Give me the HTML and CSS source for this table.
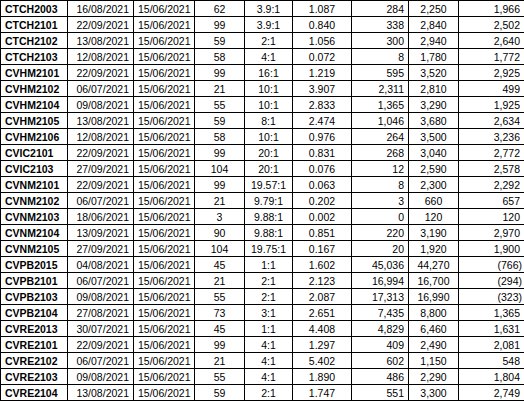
FILE: index.html
```html
<!DOCTYPE html>
<html>
<head>
<meta charset="utf-8">
<link rel="stylesheet" href="styles.css">
</head>
<body>
<table class="sheet">
<colgroup>
<col class="c1"><col class="c2"><col class="c3"><col class="c4"><col class="c5"><col class="c6"><col class="c7"><col class="c8"><col class="c9">
</colgroup>
<tbody>
<tr><td class="code">CTCH2003</td><td class="date">16/08/2021</td><td class="date">15/06/2021</td><td class="mid">62</td><td class="mid">3.9:1</td><td class="mid">1.087</td><td class="num">284</td><td class="mid">2,250</td><td class="acc">1,966</td></tr>
<tr><td class="code">CTCH2101</td><td class="date">22/09/2021</td><td class="date">15/06/2021</td><td class="mid">99</td><td class="mid">3.9:1</td><td class="mid">0.840</td><td class="num">338</td><td class="mid">2,840</td><td class="acc">2,502</td></tr>
<tr><td class="code">CTCH2102</td><td class="date">13/08/2021</td><td class="date">15/06/2021</td><td class="mid">59</td><td class="mid">2:1</td><td class="mid">1.056</td><td class="num">300</td><td class="mid">2,940</td><td class="acc">2,640</td></tr>
<tr><td class="code">CTCH2103</td><td class="date">12/08/2021</td><td class="date">15/06/2021</td><td class="mid">58</td><td class="mid">4:1</td><td class="mid">0.072</td><td class="num">8</td><td class="mid">1,780</td><td class="acc">1,772</td></tr>
<tr><td class="code">CVHM2101</td><td class="date">22/09/2021</td><td class="date">15/06/2021</td><td class="mid">99</td><td class="mid">16:1</td><td class="mid">1.219</td><td class="num">595</td><td class="mid">3,520</td><td class="acc">2,925</td></tr>
<tr><td class="code">CVHM2102</td><td class="date">06/07/2021</td><td class="date">15/06/2021</td><td class="mid">21</td><td class="mid">10:1</td><td class="mid">3.907</td><td class="num">2,311</td><td class="mid">2,810</td><td class="acc">499</td></tr>
<tr><td class="code">CVHM2104</td><td class="date">09/08/2021</td><td class="date">15/06/2021</td><td class="mid">55</td><td class="mid">10:1</td><td class="mid">2.833</td><td class="num">1,365</td><td class="mid">3,290</td><td class="acc">1,925</td></tr>
<tr><td class="code">CVHM2105</td><td class="date">13/08/2021</td><td class="date">15/06/2021</td><td class="mid">59</td><td class="mid">8:1</td><td class="mid">2.474</td><td class="num">1,046</td><td class="mid">3,680</td><td class="acc">2,634</td></tr>
<tr><td class="code">CVHM2106</td><td class="date">12/08/2021</td><td class="date">15/06/2021</td><td class="mid">58</td><td class="mid">10:1</td><td class="mid">0.976</td><td class="num">264</td><td class="mid">3,500</td><td class="acc">3,236</td></tr>
<tr><td class="code">CVIC2101</td><td class="date">22/09/2021</td><td class="date">15/06/2021</td><td class="mid">99</td><td class="mid">20:1</td><td class="mid">0.831</td><td class="num">268</td><td class="mid">3,040</td><td class="acc">2,772</td></tr>
<tr><td class="code">CVIC2103</td><td class="date">27/09/2021</td><td class="date">15/06/2021</td><td class="mid">104</td><td class="mid">20:1</td><td class="mid">0.076</td><td class="num">12</td><td class="mid">2,590</td><td class="acc">2,578</td></tr>
<tr><td class="code">CVNM2101</td><td class="date">22/09/2021</td><td class="date">15/06/2021</td><td class="mid">99</td><td class="mid">19.57:1</td><td class="mid">0.063</td><td class="num">8</td><td class="mid">2,300</td><td class="acc">2,292</td></tr>
<tr><td class="code">CVNM2102</td><td class="date">06/07/2021</td><td class="date">15/06/2021</td><td class="mid">21</td><td class="mid">9.79:1</td><td class="mid">0.202</td><td class="num">3</td><td class="mid">660</td><td class="acc">657</td></tr>
<tr><td class="code">CVNM2103</td><td class="date">18/06/2021</td><td class="date">15/06/2021</td><td class="mid">3</td><td class="mid">9.88:1</td><td class="mid">0.002</td><td class="num">0</td><td class="mid">120</td><td class="acc">120</td></tr>
<tr><td class="code">CVNM2104</td><td class="date">13/09/2021</td><td class="date">15/06/2021</td><td class="mid">90</td><td class="mid">9.88:1</td><td class="mid">0.851</td><td class="num">220</td><td class="mid">3,190</td><td class="acc">2,970</td></tr>
<tr><td class="code">CVNM2105</td><td class="date">27/09/2021</td><td class="date">15/06/2021</td><td class="mid">104</td><td class="mid">19.75:1</td><td class="mid">0.167</td><td class="num">20</td><td class="mid">1,920</td><td class="acc">1,900</td></tr>
<tr><td class="code">CVPB2015</td><td class="date">04/08/2021</td><td class="date">15/06/2021</td><td class="mid">45</td><td class="mid">1:1</td><td class="mid">1.602</td><td class="num">45,036</td><td class="mid">44,270</td><td class="acc neg">(766)</td></tr>
<tr><td class="code">CVPB2101</td><td class="date">06/07/2021</td><td class="date">15/06/2021</td><td class="mid">21</td><td class="mid">2:1</td><td class="mid">2.123</td><td class="num">16,994</td><td class="mid">16,700</td><td class="acc neg">(294)</td></tr>
<tr><td class="code">CVPB2103</td><td class="date">09/08/2021</td><td class="date">15/06/2021</td><td class="mid">55</td><td class="mid">2:1</td><td class="mid">2.087</td><td class="num">17,313</td><td class="mid">16,990</td><td class="acc neg">(323)</td></tr>
<tr><td class="code">CVPB2104</td><td class="date">27/08/2021</td><td class="date">15/06/2021</td><td class="mid">73</td><td class="mid">3:1</td><td class="mid">2.651</td><td class="num">7,435</td><td class="mid">8,800</td><td class="acc">1,365</td></tr>
<tr><td class="code">CVRE2013</td><td class="date">30/07/2021</td><td class="date">15/06/2021</td><td class="mid">45</td><td class="mid">1:1</td><td class="mid">4.408</td><td class="num">4,829</td><td class="mid">6,460</td><td class="acc">1,631</td></tr>
<tr><td class="code">CVRE2101</td><td class="date">22/09/2021</td><td class="date">15/06/2021</td><td class="mid">99</td><td class="mid">4:1</td><td class="mid">1.297</td><td class="num">409</td><td class="mid">2,490</td><td class="acc">2,081</td></tr>
<tr><td class="code">CVRE2102</td><td class="date">06/07/2021</td><td class="date">15/06/2021</td><td class="mid">21</td><td class="mid">4:1</td><td class="mid">5.402</td><td class="num">602</td><td class="mid">1,150</td><td class="acc">548</td></tr>
<tr><td class="code">CVRE2103</td><td class="date">09/08/2021</td><td class="date">15/06/2021</td><td class="mid">55</td><td class="mid">4:1</td><td class="mid">1.890</td><td class="num">486</td><td class="mid">2,290</td><td class="acc">1,804</td></tr>
<tr><td class="code">CVRE2104</td><td class="date">13/08/2021</td><td class="date">15/06/2021</td><td class="mid">59</td><td class="mid">2:1</td><td class="mid">1.747</td><td class="num">551</td><td class="mid">3,300</td><td class="acc">2,749</td></tr>
</tbody>
</table>
</body>
</html>
```
FILE: styles.css
```css
html, body {
  margin: 0;
  padding: 0;
  background: #ffffff;
}

.sheet {
  border-collapse: collapse;
  table-layout: fixed;
  width: 524px;
  font-family: "Liberation Sans", Arial, sans-serif;
  font-size: 10.5px;
  color: #000;
}

.c1 { width: 67px; }
.c2 { width: 66px; }
.c3 { width: 61px; }
.c4 { width: 50px; }
.c5 { width: 48px; }
.c6 { width: 59px; }
.c7 { width: 57px; }
.c8 { width: 50px; }
.c9 { width: 66px; }

.sheet tr {
  height: 16px;
}

.sheet td {
  border: 1px solid #000;
  padding: 0 4px;
  height: 15px;
  line-height: 14px;
  white-space: nowrap;
  overflow: hidden;
  vertical-align: middle;
}

.code {
  font-weight: bold;
  text-align: left;
  padding-left: 3px;
}

.date {
  text-align: right;
}

.mid {
  text-align: center;
}

.num {
  text-align: right;
}

.acc {
  text-align: right;
  padding-right: 6px;
}

.acc.neg {
  padding-right: 2px;
}
```
